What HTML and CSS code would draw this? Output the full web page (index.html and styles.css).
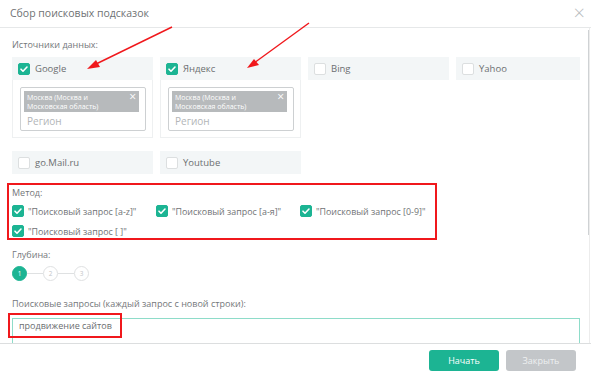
FILE: index.html
```html
<!DOCTYPE html>
<html lang="ru">
<head>
    <meta charset="UTF-8">
    <title>Сбор поисковых подсказок</title>
    <link rel="stylesheet" href="styles.css">
</head>
<body>
    <div class="modal">
        <header class="modal-header">
            <h1>Сбор поисковых подсказок</h1>
            <span class="close">&times;</span>
        </header>

        <div class="modal-body">
            <div class="scroll-thumb"></div>

            <p class="label">Источники данных:</p>
            <div class="sources">
                <div class="source">
                    <div class="source-head"><span class="cb on"></span>Google</div>
                    <div class="source-body">
                        <div class="region">
                            <div class="tag">Москва (Москва и Московская область)<span class="tag-x">&times;</span></div>
                            <div class="placeholder">Регион</div>
                        </div>
                    </div>
                </div>
                <div class="source">
                    <div class="source-head"><span class="cb on"></span>Яндекс</div>
                    <div class="source-body">
                        <div class="region">
                            <div class="tag">Москва (Москва и Московская область)<span class="tag-x">&times;</span></div>
                            <div class="placeholder">Регион</div>
                        </div>
                    </div>
                </div>
                <div class="source">
                    <div class="source-head"><span class="cb"></span>Bing</div>
                </div>
                <div class="source">
                    <div class="source-head"><span class="cb"></span>Yahoo</div>
                </div>
                <div class="source">
                    <div class="source-head"><span class="cb"></span>go.Mail.ru</div>
                </div>
                <div class="source">
                    <div class="source-head"><span class="cb"></span>Youtube</div>
                </div>
            </div>

            <section class="method">
                <p class="label">Метод:</p>
                <div class="methods">
                    <label class="opt"><span class="cb on"></span>"Поисковый запрос [a-z]"</label>
                    <label class="opt"><span class="cb on"></span>"Поисковый запрос [а-я]"</label>
                    <label class="opt"><span class="cb on"></span>"Поисковый запрос [0-9]"</label>
                    <label class="opt"><span class="cb on"></span>"Поисковый запрос [ ]"</label>
                </div>
            </section>

            <p class="label">Глубина:</p>
            <div class="steps">
                <span class="step active">1</span>
                <span class="step-line"></span>
                <span class="step">2</span>
                <span class="step-line"></span>
                <span class="step">3</span>
            </div>

            <p class="label">Поисковые запросы (каждый запрос с новой строки):</p>
            <div class="queries">продвижение сайтов</div>
        </div>

        <footer class="modal-footer">
            <button class="btn btn-primary">Начать</button>
            <button class="btn btn-muted">Закрыть</button>
        </footer>

        <!-- annotations drawn over the screenshot -->
        <div class="mark mark-query"></div>
        <svg class="arrows" width="591" height="376" viewBox="0 0 591 376">
            <g stroke="#f0181c" stroke-width="1.4" fill="#f0181c">
                <line x1="172" y1="27" x2="94" y2="65"/>
                <polygon points="87,69 96,60 100,67" stroke="none"/>
                <line x1="309" y1="23" x2="254" y2="63"/>
                <polygon points="247,68 254,59 259,65" stroke="none"/>
            </g>
        </svg>
    </div>
</body>
</html>
```

FILE: styles.css
```css
:root {
    --green: #1cb493;
    --text: #6b6e70;
    --line: #e6e8e9;
    --panel: #f3f6f7;
}

* {
    box-sizing: border-box;
}

body {
    margin: 0;
    background: #fff;
    font-family: "Open Sans", sans-serif;
    color: var(--text);
}

.modal {
    position: relative;
    width: 591px;
    height: 376px;
    display: flex;
    flex-direction: column;
    overflow: hidden;
}

.modal-header {
    height: 28px;
    flex: none;
    display: flex;
    align-items: center;
    justify-content: space-between;
    padding: 0 6px 2px 10px;
    border-bottom: 1px solid var(--line);
}

.modal-header h1 {
    margin: 0;
    font-size: 10.5px;
    font-weight: 400;
    color: #6f7274;
}

.close {
    font-size: 20px;
    line-height: 1;
    color: #b9bcbe;
    font-weight: 300;
}

.modal-body {
    position: relative;
    flex: 1;
    overflow: hidden;
    padding: 10px 10px 0 12px;
    margin-right: 1px;
    border-right: 1px solid #ececec;
}

.scroll-thumb {
    position: absolute;
    right: 0;
    top: 2px;
    width: 1px;
    height: 205px;
    background: #cfd2d4;
}

.label {
    margin: 0;
    font-size: 9px;
    line-height: 14px;
    color: #74777a;
}

.sources {
    display: grid;
    grid-template-columns: 141px 141px 141px 124px;
    column-gap: 7px;
    row-gap: 13px;
    margin-top: 5px;
    align-items: start;
}

.source-head {
    height: 23px;
    display: flex;
    align-items: center;
    padding-left: 6px;
    background: var(--panel);
    font-size: 9.5px;
    color: #6c6f71;
}

.source-body {
    padding: 7px 6px 6px 7px;
    border: 1px solid #eef0f1;
    border-top: none;
}

.region {
    height: 44px;
    border: 1px solid #cdd0d2;
    border-radius: 2px;
    padding: 3px 6px 0 3px;
}

.tag {
    position: relative;
    height: 21px;
    background: #b7babc;
    color: #fff;
    font-size: 7px;
    line-height: 9px;
    padding: 2px 30px 0 3px;
}

.tag-x {
    position: absolute;
    right: 3px;
    top: 0;
    font-size: 12px;
    line-height: 12px;
}

.placeholder {
    padding: 2px 0 0 3px;
    font-size: 10px;
    color: #b2b5b7;
}

.cb {
    width: 12px;
    height: 12px;
    flex: none;
    margin-right: 5px;
    border-radius: 2px;
    border: 1px solid #dcdfe0;
    background: #fff;
}

.cb.on {
    border-color: var(--green);
    background: var(--green) url("data:image/svg+xml,%3Csvg xmlns='http://www.w3.org/2000/svg' viewBox='0 0 12 12'%3E%3Cpath d='M3 6.2l2 2 4-4.2' fill='none' stroke='%23fff' stroke-width='1.6' stroke-linecap='round' stroke-linejoin='round'/%3E%3C/svg%3E") center / 12px no-repeat;
}

.method {
    width: 430px;
    margin: 9px 0 8px -5px;
    padding: 1px 3px 0 3px;
    border: 2px solid #f0181c;
}

.methods {
    display: grid;
    grid-template-columns: 144px 144px auto;
    row-gap: 6px;
    margin-top: 4px;
}

.opt {
    display: flex;
    align-items: center;
    height: 14px;
    white-space: nowrap;
    font-size: 8.9px;
    color: #707375;
}

.opt .cb {
    margin-right: 4px;
}

.steps {
    display: flex;
    align-items: center;
    margin: 4px 0 16px;
}

.step {
    width: 15px;
    height: 15px;
    border-radius: 50%;
    border: 1px solid #dfe1e2;
    display: grid;
    place-content: center;
    font-size: 6.5px;
    color: #c4c6c8;
    background: #fff;
}

.step.active {
    background: var(--green);
    border-color: var(--green);
    color: #fff;
}

.step-line {
    width: 16px;
    height: 1px;
    background: #dfe1e2;
}

.queries {
    height: 40px;
    margin-top: 7px;
    margin-right: -1px;
    border: 1px solid #8edcc9;
    padding: 0 6px;
    line-height: 14px;
    font-size: 9px;
    color: #6a6d6f;
}

.modal-footer {
    height: 33px;
    flex: none;
    display: flex;
    justify-content: flex-end;
    gap: 7px;
    padding: 6px 15px 0 0;
    border-top: 1px solid #dcdedf;
}

.btn {
    width: 70px;
    height: 21px;
    border: none;
    border-radius: 3px;
    font-family: inherit;
    font-size: 9px;
    color: #fff;
}

.btn-primary {
    background: var(--green);
}

.btn-muted {
    background: #c3c6c9;
    color: #eef0f1;
}

.mark {
    position: absolute;
    border: 2px solid #f0181c;
}

.mark-query {
    left: 8px;
    top: 313px;
    width: 114px;
    height: 25px;
}

.arrows {
    position: absolute;
    left: 0;
    top: 0;
    pointer-events: none;
}
```
